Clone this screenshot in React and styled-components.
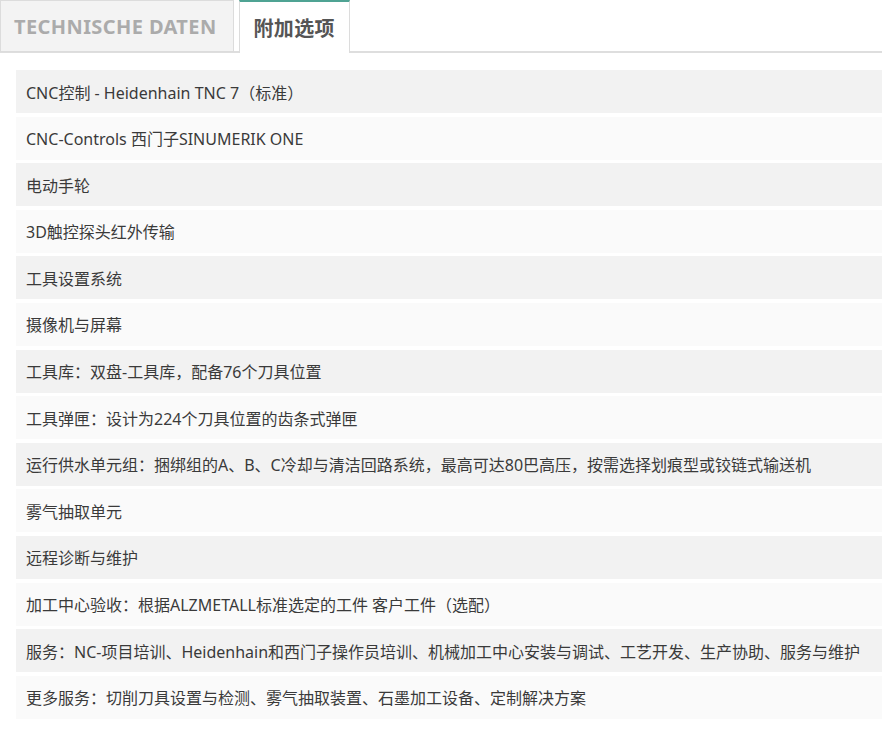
import React, { useState } from "react";
import styled, { createGlobalStyle } from "styled-components";

const GlobalStyle = createGlobalStyle`
  body {
    margin: 0;
    background: #fff;
    font-family: "Noto Sans", "Open Sans", "Noto Sans CJK SC", sans-serif;
  }
`;

const options = [
  "CNC控制 - Heidenhain TNC 7（标准）",
  "CNC-Controls 西门子SINUMERIK ONE",
  "电动手轮",
  "3D触控探头红外传输",
  "工具设置系统",
  "摄像机与屏幕",
  "工具库：双盘-工具库，配备76个刀具位置",
  "工具弹匣：设计为224个刀具位置的齿条式弹匣",
  "运行供水单元组：捆绑组的A、B、C冷却与清洁回路系统，最高可达80巴高压，按需选择划痕型或铰链式输送机",
  "雾气抽取单元",
  "远程诊断与维护",
  "加工中心验收：根据ALZMETALL标准选定的工件 客户工件（选配）",
  "服务：NC-项目培训、Heidenhain和西门子操作员培训、机械加工中心安装与调试、工艺开发、生产协助、服务与维护",
  "更多服务：切削刀具设置与检测、雾气抽取装置、石墨加工设备、定制解决方案",
];

const App = () => {
  const [active, setActive] = useState(1);
  const tabs = ["TECHNISCHE DATEN", "附加选项"];

  return (
    <>
      <GlobalStyle />
      <Wrapper>
        <TabBar>
          {tabs.map((t, i) => (
            <Tab key={t} active={active === i} onClick={() => setActive(i)}>
              {t}
            </Tab>
          ))}
        </TabBar>
        <OptionList>
          {options.map((o, i) => (
            <OptionRow key={i} odd={i % 2 === 0}>
              {o}
            </OptionRow>
          ))}
        </OptionList>
      </Wrapper>
    </>
  );
};

export default App;

const Wrapper = styled.div`
  width: 882px;
`;

const TabBar = styled.div`
  display: flex;
  gap: 5px;
  height: 53px;
  border-bottom: 2px solid #dedede;
  box-sizing: border-box;
  align-items: stretch;
`;

const Tab = styled.div`
  box-sizing: border-box;
  height: ${(p) => (p.active ? "53px" : "52px")};
  padding: 0 ${(p) => (p.active ? "14px" : "16px")} 0 ${(p) => (p.active ? "14px" : "13px")};
  display: flex;
  align-items: center;
  font-size: 20px;
  font-weight: 700;
  color: ${(p) => (p.active ? "#555" : "#ababab")};
  background: ${(p) => (p.active ? "#fff" : "#f3f3f3")};
  border: 1px solid #dcdcdc;
  border-top: ${(p) => (p.active ? "2px solid #4fa393" : "1px solid #dcdcdc")};
  border-bottom: ${(p) => (p.active ? "none" : "1px solid #dcdcdc")};
  margin-bottom: ${(p) => (p.active ? "-2px" : "0")};
  letter-spacing: ${(p) => (p.active ? "0.3px" : "0.4px")};
  cursor: pointer;
`;

const OptionList = styled.ul`
  list-style: none;
  margin: 17px 0 0 16px;
  padding: 0;
  display: flex;
  flex-direction: column;
  gap: 3.6px;
`;

const OptionRow = styled.li`
  height: 43px;
  display: flex;
  align-items: center;
  padding-left: 10px;
  font-size: 16px;
  color: #3a3a3a;
  background: ${(p) => (p.odd ? "#f2f2f2" : "#fafafa")};
`;
